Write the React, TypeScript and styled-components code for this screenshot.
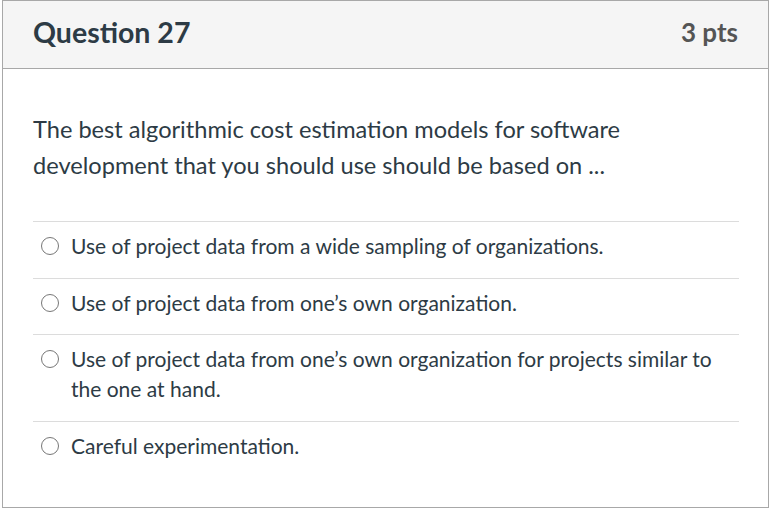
import React from 'react';
import styled, { createGlobalStyle } from 'styled-components';

const GlobalStyle = createGlobalStyle`
  html, body {
    margin: 0;
    padding: 0;
    background: #ffffff;
  }
  body {
    font-family: Lato, "Open Sans", "Liberation Sans", sans-serif;
  }
`;

const answers = [
  'Use of project data from a wide sampling of organizations.',
  'Use of project data from one\u2019s own organization.',
  'Use of project data from one\u2019s own organization for projects similar to the one at hand.',
  'Careful experimentation.',
];

const App: React.FC = () => {
  return (
    <>
      <GlobalStyle />
      <Page>
        <QuestionCard>
          <CardHeader>
            <Title>Question 27</Title>
            <Points>3 pts</Points>
          </CardHeader>
          <CardBody>
            <Prompt>
              The best algorithmic cost estimation models for software
              development that you should use should be based on ...
            </Prompt>
            <AnswerList>
              {answers.map((text) => (
                <AnswerRow key={text}>
                  <Radio />
                  <AnswerText>{text}</AnswerText>
                </AnswerRow>
              ))}
            </AnswerList>
          </CardBody>
        </QuestionCard>
      </Page>
    </>
  );
};

const Page = styled.div`
  padding: 0 3px 0 2px;
`;

const QuestionCard = styled.section`
  border: 1px solid #a8a8a8;
  height: 508px;
  box-sizing: border-box;
  background: #ffffff;
`;

const CardHeader = styled.header`
  display: flex;
  justify-content: space-between;
  align-items: center;
  height: 68px;
  padding: 0 30px 5px 30px;
  background: #f5f5f5;
  border-bottom: 1px solid #a8a8a8;
  box-sizing: border-box;
`;

const Title = styled.h2`
  margin: 0;
  font-size: 28.5px;
  font-weight: 700;
  color: #2d3b45;
`;

const Points = styled.span`
  font-size: 26px;
  font-weight: 700;
  color: #555555;
`;

const CardBody = styled.div`
  padding: 42px 29px 0 30px;
`;

const Prompt = styled.p`
  margin: 0 0 38px;
  font-size: 23.6px;
  line-height: 36px;
  color: #2d3b45;
`;

const AnswerList = styled.div`
  display: flex;
  flex-direction: column;
`;

const AnswerRow = styled.label`
  display: flex;
  align-items: flex-start;
  gap: 12px;
  padding: 9px 0 16.5px 8px;
  border-top: 1px solid #dcdcdc;
`;

const Radio = styled.span`
  flex: none;
  width: 18px;
  height: 18px;
  margin-top: 6px;
  border: 1.5px solid #777777;
  border-radius: 50%;
  box-sizing: border-box;
`;

const AnswerText = styled.span`
  font-size: 21px;
  line-height: 30px;
  color: #2d3b45;
`;

export default App;
